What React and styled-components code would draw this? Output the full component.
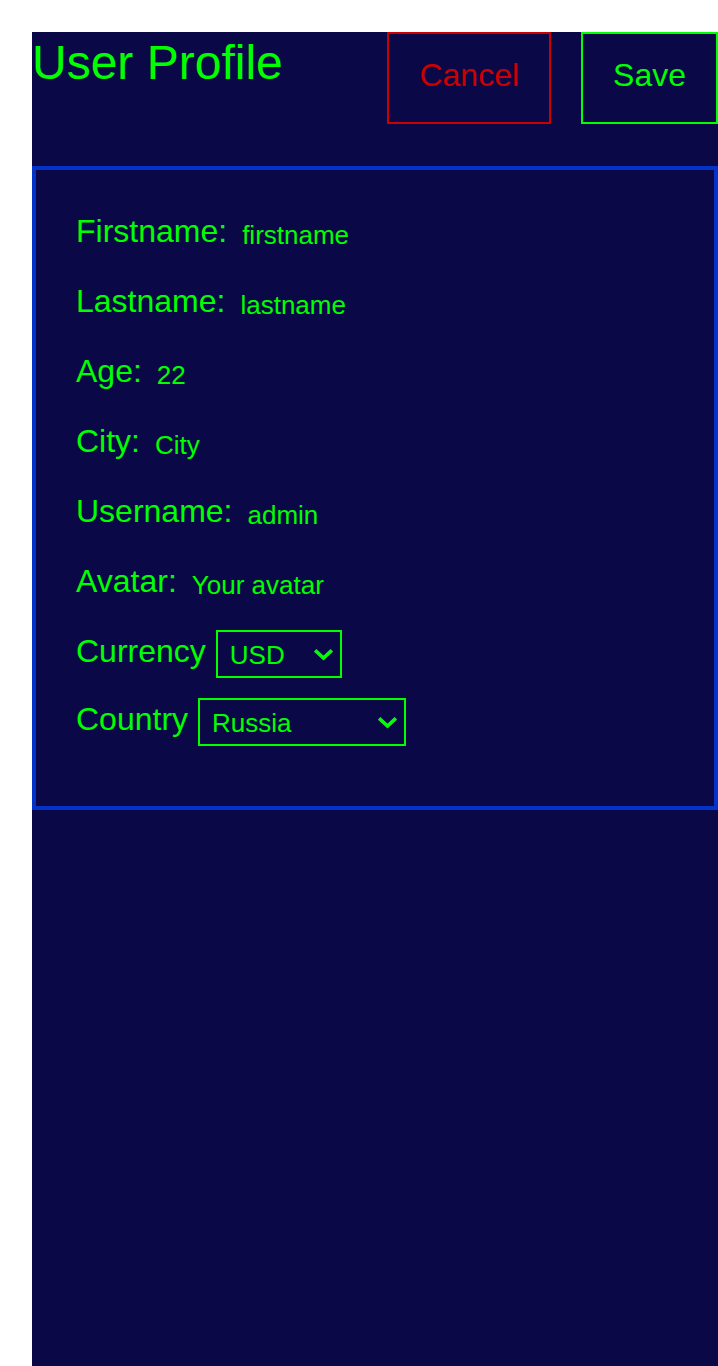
import React from "react";
import styled, { createGlobalStyle } from "styled-components";

const GlobalStyle = createGlobalStyle`
  html, body {
    margin: 0;
    padding: 0;
    background: #ffffff;
  }
  body {
    font-family: "Liberation Sans", Arial, sans-serif;
  }
`;

const GREEN = "#00ff00";
const RED = "#cc0000";
const BG = "#0a0846";
const BLUE = "#0433c9";

const Page = styled.div`
  margin: 32px 0 0 32px;
  min-height: calc(100vh - 32px);
  background: ${BG};
  color: ${GREEN};
  font-family: "Liberation Sans", Arial, sans-serif;
`;

const Header = styled.header`
  display: flex;
  align-items: flex-start;
  margin-bottom: 42px;
`;

const Title = styled.h1`
  margin: 0;
  padding-top: 3px;
  font-size: 48px;
  font-weight: 400;
  line-height: normal;
  color: ${GREEN};
`;

const Actions = styled.div`
  margin-left: auto;
  display: flex;
  gap: 30px;
`;

const Button = styled.button`
  height: 92px;
  padding: 0 30px 6px;
  border: 2px solid ${(p) => (p.$variant === "cancel" ? RED : GREEN)};
  background: transparent;
  color: ${(p) => (p.$variant === "cancel" ? RED : GREEN)};
  font-family: "Liberation Sans", Arial, sans-serif;
  font-size: 32px;
  cursor: pointer;
`;

const Card = styled.section`
  border: 4px solid ${BLUE};
  padding: 43px 40px 60px;
  display: flex;
  flex-direction: column;
  align-items: flex-start;
`;

const FieldRow = styled.div`
  display: flex;
  align-items: flex-start;
  gap: 15px;
  height: 37px;
  margin-bottom: ${(p) => p.$mb}px;
`;

const SelectRow = styled.div`
  display: flex;
  align-items: flex-start;
  gap: 10px;
  margin-bottom: ${(p) => p.$mb}px;
`;

const Label = styled.label`
  font-size: 32px;
  line-height: normal;
  color: ${GREEN};
  margin-top: ${(p) => p.$offset || 0}px;
`;

const Input = styled.input`
  margin-top: 8px;
  height: 29px;
  font-family: "Liberation Sans", Arial, sans-serif;
  font-size: 26px;
  line-height: normal;
  padding: 0;
  border: none;
  outline: none;
  background: transparent;
  color: ${GREEN};
  width: 300px;
`;

const SelectWrap = styled.div`
  position: relative;
  display: inline-flex;
`;

const Select = styled.select`
  appearance: none;
  -webkit-appearance: none;
  box-sizing: border-box;
  width: ${(p) => p.$w}px;
  height: 48px;
  padding: 2px 40px 0 12px;
  border: 2px solid ${GREEN};
  border-radius: 0;
  background: transparent;
  color: ${GREEN};
  font-family: "Liberation Sans", Arial, sans-serif;
  font-size: 26px;
  outline: none;

  option {
    background: ${BG};
    color: ${GREEN};
  }
`;

const Chevron = styled.svg`
  position: absolute;
  right: 9px;
  top: 19px;
  width: 19px;
  height: 12px;
  pointer-events: none;
`;

function Dropdown({ width, value, options }) {
  return (
    <SelectWrap>
      <Select $w={width} defaultValue={value}>
        {options.map((o) => (
          <option key={o} value={o}>
            {o}
          </option>
        ))}
      </Select>
      <Chevron viewBox="0 0 19 12">
        <path
          d="M2.5 2.5 L9.5 9 L16.5 2.5"
          fill="none"
          stroke={GREEN}
          strokeWidth="3.6"
          strokeLinecap="square"
        />
      </Chevron>
    </SelectWrap>
  );
}

const fields = [
  { label: "Firstname:", value: "firstname" },
  { label: "Lastname:", value: "lastname" },
  { label: "Age:", value: "22" },
  { label: "City:", value: "City" },
  { label: "Username:", value: "admin" },
  { label: "Avatar:", value: "Your avatar" },
];

export default function App() {
  return (
    <>
      <GlobalStyle />
      <Page>
        <Header>
          <Title>User Profile</Title>
          <Actions>
            <Button $variant="cancel">Cancel</Button>
            <Button $variant="save">Save</Button>
          </Actions>
        </Header>
        <Card>
          {fields.map((f, i) => (
            <FieldRow key={f.label} $mb={i === fields.length - 1 ? 30 : 33}>
              <Label>{f.label}</Label>
              <Input defaultValue={f.value} placeholder={f.label} />
            </FieldRow>
          ))}
          <SelectRow $mb={20}>
            <Label $offset={3}>Currency</Label>
            <Dropdown width={126} value="USD" options={["RUB", "EUR", "USD"]} />
          </SelectRow>
          <SelectRow $mb={0}>
            <Label $offset={3}>Country</Label>
            <Dropdown
              width={208}
              value="Russia"
              options={["Armenia", "Russia", "Belarus", "Kazakhstan", "Ukraine"]}
            />
          </SelectRow>
        </Card>
      </Page>
    </>
  );
}
